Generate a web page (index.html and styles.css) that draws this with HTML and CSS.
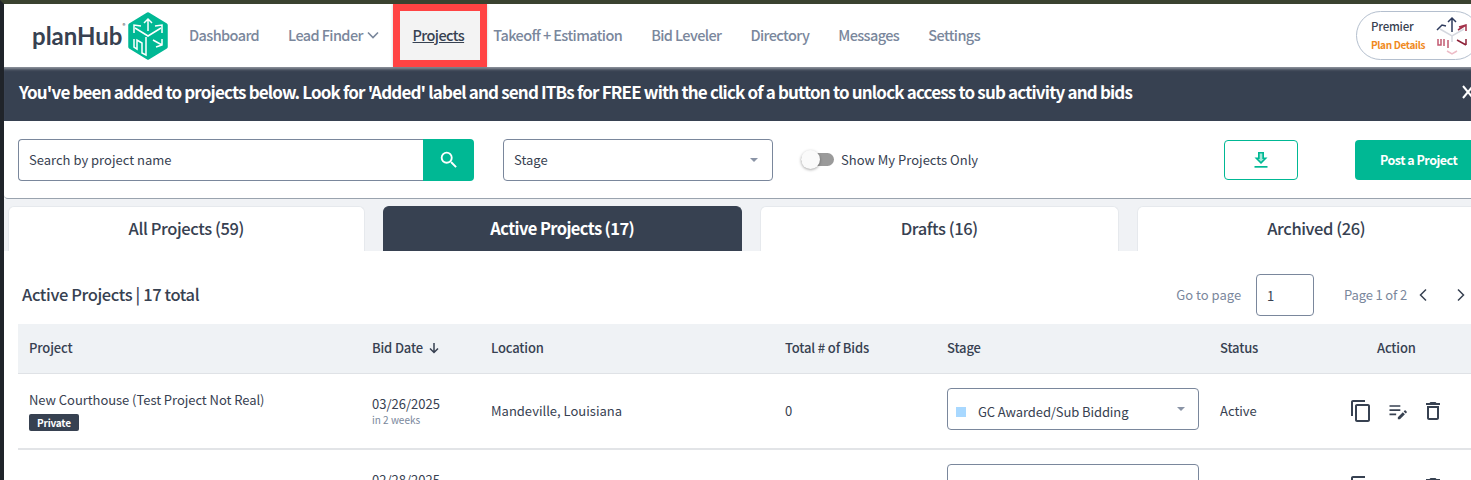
FILE: index.html
```html
<!DOCTYPE html>
<html lang="en">
<head>
<meta charset="utf-8">
<title>planHub Projects</title>
<link rel="stylesheet" href="styles.css">
</head>
<body>
<div class="app">
  <header class="nav">
    <div class="logo">
      <span class="logo-text">planHub</span><span class="logo-reg">®</span>
      <svg class="logo-mark" viewBox="0 0 42 48" width="42" height="48">
        <path d="M21 2 39 13v22L21 46 3 35V13z" fill="#00b894" stroke="#00b894" stroke-width="3.500" stroke-linejoin="round"/>
        <g fill="none" stroke="#fff" stroke-width="1.500">
          <path d="M21 7v12M17 11l4-4 4 4"/>
          <path d="M8 16l13 8 13-8"/>
          <path d="M7 21v-8l7 1M35 21v-8l-7 1"/>
          <path d="M7 27v8l3 2v-9l5 3v10l4 2V25"/>
          <path d="M26 28l9 5M35 27v6l-6 2"/>
        </g>
      </svg>
    </div>
    <nav class="menu">
      <a class="menu-item">Dashboard</a>
      <a class="menu-item">Lead Finder
        <svg class="chev" viewBox="0 0 12 8" width="12" height="8"><path d="M1 1.500l5 5 5-5" fill="none" stroke="#7a879c" stroke-width="1.600"/></svg>
      </a>
      <a class="menu-item menu-current"><span>Projects</span></a>
      <a class="menu-item">Takeoff + Estimation</a>
      <a class="menu-item">Bid Leveler</a>
      <a class="menu-item">Directory</a>
      <a class="menu-item">Messages</a>
      <a class="menu-item">Settings</a>
    </nav>
    <div class="plan">
      <div class="plan-text">
        <span class="plan-name">Premier</span>
        <span class="plan-link">Plan Details</span>
      </div>
      <svg class="plan-cube" viewBox="0 0 36 40" width="36" height="40">
        <g fill="none" stroke-width="1.500">
          <path d="M18 3v14M14 7l4-4 4 4" stroke="#2d3a5c"/>
          <path d="M3 15l5-5 4 1" stroke="#2d3a5c"/>
          <path d="M25 12l7-2v6M32 10l-8 5" stroke="#a3324a"/>
          <path d="M6 14l12 7 12-7M18 21v6" stroke="#d5d8df"/>
          <path d="M4 24v6h3v-6M10 24v7M14 25v8" stroke="#c25a72"/>
          <path d="M23 25l9 5M32 24v6" stroke="#8e2238"/>
          <path d="M13 36l5 3 5-3" stroke="#edbcc7"/>
        </g>
      </svg>
    </div>
  </header>

  <div class="banner">
    <p class="banner-text">You've been added to projects below. Look for 'Added' label and send ITBs for FREE with the click of a button to unlock access to sub activity and bids</p>
    <svg class="banner-close" viewBox="0 0 12 14" width="12" height="14"><path d="M1 1l10 12M11 1 1 13" stroke="#fff" stroke-width="2"/></svg>
  </div>

  <section class="toolbar">
    <div class="search">
      <span class="search-input">Search by project name</span>
      <span class="search-btn">
        <svg viewBox="0 0 24 24" width="22" height="22"><path fill="#fff" d="M15.500 14h-.79l-.28-.27A6.470 6.470 0 0 0 16 9.500 6.500 6.500 0 1 0 9.500 16c1.610 0 3.090-.59 4.230-1.570l.27.28v.79l5 4.990L20.490 19l-4.990-5zm-6 0C7.010 14 5 11.990 5 9.500S7.010 5 9.500 5 14 7.010 14 9.500 11.990 14 9.500 14z"/></svg>
      </span>
    </div>
    <div class="select stage-filter">
      <span>Stage</span>
      <i class="caret"></i>
    </div>
    <div class="toggle-wrap">
      <span class="toggle"><i class="knob"></i></span>
      <span class="toggle-label">Show My Projects Only</span>
    </div>
    <button class="btn-outline">
      <svg viewBox="0 0 16 16" width="16" height="16"><path fill="#00b894" d="M5 0h6v5.500h3.500L8 12 1.500 5.500H5z"/><path d="M6.700 1.500h2.600v5.500h1.500L8 9.800 5.200 7h1.500z" fill="#a6e8d8"/><path d="M1.500 14h13v1.700h-13z" fill="#00b894"/></svg>
    </button>
    <button class="btn-solid">Post a Project</button>
  </section>

  <div class="tabs">
    <div class="tab">All Projects (59)</div>
    <div class="tab tab-active">Active Projects (17)</div>
    <div class="tab">Drafts (16)</div>
    <div class="tab">Archived (26)</div>
  </div>

  <main class="panel">
    <div class="panel-head">
      <h2 class="panel-title">Active Projects | 17 total</h2>
      <div class="pager">
        <span class="pager-label">Go to page</span>
        <span class="pager-input">1</span>
        <span class="pager-label pager-count">Page 1 of 2</span>
        <svg class="pager-prev" viewBox="0 0 10 14" width="10" height="14"><path d="M8 1.500 2.500 7 8 12.500" fill="none" stroke="#374151" stroke-width="1.500"/></svg>
        <svg class="pager-next" viewBox="0 0 10 14" width="10" height="14"><path d="M2 1.500 7.500 7 2 12.500" fill="none" stroke="#374151" stroke-width="1.500"/></svg>
      </div>
    </div>

    <div class="row row-head">
      <div class="cell">Project</div>
      <div class="cell">Bid Date
        <svg class="sort" viewBox="0 0 12 12" width="12" height="12"><path d="M6 1v9M2 6.500 6 10.500l4-4" fill="none" stroke="#374151" stroke-width="1.500"/></svg>
      </div>
      <div class="cell">Location</div>
      <div class="cell">Total # of Bids</div>
      <div class="cell">Stage</div>
      <div class="cell">Status</div>
      <div class="cell cell-action">Action</div>
    </div>

    <div class="row row-body">
      <div class="cell cell-project">
        <span class="project-name">New Courthouse (Test Project Not Real)</span>
        <span class="badge">Private</span>
      </div>
      <div class="cell cell-date">
        <span>03/26/2025</span>
        <small>in 2 weeks</small>
      </div>
      <div class="cell">Mandeville, Louisiana</div>
      <div class="cell">0</div>
      <div class="cell">
        <div class="select stage-select">
          <i class="swatch"></i><span class="stage-name">GC Awarded/Sub Bidding</span>
          <i class="caret"></i>
        </div>
      </div>
      <div class="cell">Active</div>
      <div class="cell cell-icons">
        <svg viewBox="0 0 24 24" width="24" height="24"><path d="M16 1H4c-1.100 0-2 .9-2 2v14h2V3h12V1zm3 4H8c-1.100 0-2 .9-2 2v14c0 1.100.9 2 2 2h11c1.100 0 2-.9 2-2V7c0-1.100-.9-2-2-2zm0 16H8V7h11v14z"/></svg>
        <svg viewBox="0 0 24 24" width="20" height="20"><path d="M3 5h13v2H3zM3 10h13v2H3zM3 15h8v2H3zM13 19.500V22h2.500l6-6L19 13.500zM20 12.500l2.500 2.500 1-1a1 1 0 0 0 0-1.400l-1.100-1.100a1 1 0 0 0-1.400 0z"/></svg>
        <svg viewBox="0 0 24 24" width="24" height="24"><path d="M6 19c0 1.100.9 2 2 2h8c1.100 0 2-.9 2-2V7H6v12zM8 9h8v10H8V9zm7.500-5-1-1h-5l-1 1H5v2h14V4h-3.500z"/></svg>
      </div>
    </div>

    <div class="row row-body">
      <div class="cell"></div>
      <div class="cell cell-date"><span>02/28/2025</span><small>&nbsp;</small></div>
      <div class="cell"></div>
      <div class="cell"></div>
      <div class="cell"><div class="select stage-select"></div></div>
      <div class="cell"></div>
      <div class="cell cell-icons">
        <svg viewBox="0 0 24 24" width="24" height="24"><path d="M16 1H4c-1.100 0-2 .9-2 2v14h2V3h12V1zm3 4H8c-1.100 0-2 .9-2 2v14c0 1.100.9 2 2 2h11c1.100 0 2-.9 2-2V7c0-1.100-.9-2-2-2zm0 16H8V7h11v14z"/></svg>
        <svg viewBox="0 0 24 24" width="20" height="20"><path d="M3 5h13v2H3zM3 10h13v2H3zM3 15h8v2H3z"/></svg>
        <svg viewBox="0 0 24 24" width="24" height="24"><path d="M6 19c0 1.100.9 2 2 2h8c1.100 0 2-.9 2-2V7H6v12zM8 9h8v10H8V9zm7.500-5-1-1h-5l-1 1H5v2h14V4h-3.500z"/></svg>
      </div>
    </div>
  </main>
</div>
</body>
</html>
```

FILE: styles.css
```css
* { box-sizing: border-box; }

html, body {
  margin: 0;
  height: 480px;
  overflow: hidden;
  background: #fff;
}

body {
  font-family: "Noto Sans CJK SC", "Noto Sans", sans-serif;
  font-size: 13px;
  color: #374151;
}

.app {
  width: 1471px;
  height: 480px;
  overflow: hidden;
  border-top: 4px solid #3a4230;
  border-left: 4px solid #20242a;
}

/* top navigation */
.nav {
  display: flex;
  align-items: center;
  height: 63px;
  width: 1467px;
  background: #fff;
}

.logo {
  display: flex;
  align-items: center;
  width: 171px;
  padding: 0 6px 0 28px;
  flex: none;
}

.logo-text {
  font-family: "Lato", sans-serif;
  font-size: 24px;
  font-weight: 700;
  line-height: 1;
  color: #374151;
}

.logo-reg {
  font-size: 6px;
  line-height: 8px;
  align-self: flex-start;
  margin-top: 10px;
  color: #374151;
}

.logo-mark { flex: none; margin: 0 0 0 auto; }

.menu {
  display: flex;
  align-items: center;
  height: 100%;
  font-size: 14.500px;
  font-weight: 500;
  letter-spacing: -0.6px;
  color: #7a879c;
}

.menu-item {
  display: flex;
  align-items: center;
  gap: 4px;
  margin-top: -2px;
  padding: 0 14.500px;
  white-space: nowrap;
}

.menu-item:first-child { padding-left: 14px; }

.menu-current {
  height: 63px;
  width: 94px;
  justify-content: center;
  margin: 0 -8.500px 0 0;
  padding: 0 4px 2px 0;
  background: #f3f3f3;
  border: 7px solid #ff4343;
  box-shadow: 0 0 3px rgba(0, 0, 0, .2);
  color: #374151;
}

.menu-current span { text-decoration: underline; }

.chev { margin-top: 1px; }

.plan {
  display: flex;
  align-items: center;
  flex: none;
  width: 124px;
  height: 49px;
  margin: -1px -9px 0 auto;
  padding-left: 14px;
  border: 1px solid #b4bfce;
  border-radius: 25px;
  background: #fff;
}

.plan-text {
  display: flex;
  flex-direction: column;
  gap: 5px;
  width: 63px;
}

.plan-name {
  font-size: 11.500px;
  font-weight: 500;
  line-height: 14px;
  letter-spacing: -0.2px;
}

.plan-link {
  font-size: 10px;
  font-weight: 700;
  line-height: 13px;
  letter-spacing: -0.35px;
  color: #f08a1d;
  white-space: nowrap;
}

.plan-cube { flex: none; }

/* banner */
.banner {
  display: flex;
  align-items: center;
  justify-content: space-between;
  height: 54px;
  padding: 0 0 5px 15px;
  background: #374151;
  box-shadow: inset 0 4px 3px -2px rgba(255, 255, 255, .45);
}

.banner-text {
  margin: 0;
  font-size: 17px;
  font-weight: 700;
  letter-spacing: -0.83px;
  color: #fff;
  white-space: nowrap;
}

.banner-close { flex: none; margin-right: -3px; }

/* filter bar */
.toolbar {
  display: flex;
  align-items: center;
  height: 78px;
  padding-left: 14px;
  background: #fff;
  border-bottom: 1px solid #9aa3ae;
  border-radius: 0 0 0 4px;
}

.search {
  display: flex;
  width: 456px;
  height: 42px;
  flex: none;
}

.search-input {
  flex: 1;
  display: flex;
  align-items: center;
  padding-left: 10px;
  border: 1px solid #7a879c;
  border-right: 0;
  border-radius: 4px 0 0 4px;
}

.search-btn {
  display: flex;
  align-items: center;
  justify-content: center;
  width: 51px;
  background: #00b894;
  border-radius: 0 4px 4px 0;
}

.select {
  display: flex;
  align-items: center;
  border: 1px solid #7a879c;
  border-radius: 4px;
  background: #fff;
}

.caret {
  width: 0;
  height: 0;
  border-left: 4.500px solid transparent;
  border-right: 4.500px solid transparent;
  border-top: 4.500px solid #8a94a6;
  margin-left: auto;
}

.stage-filter {
  width: 270px;
  height: 42px;
  margin-left: 29px;
  padding: 0 14px 0 10px;
  flex: none;
}

.toggle-wrap {
  display: flex;
  align-items: center;
  gap: 7px;
  margin: -1px 0 0 28px;
  flex: none;
  width: 423px;
}

.toggle {
  position: relative;
  display: block;
  width: 33px;
  height: 13px;
  border-radius: 7px;
  background: #9a9a9a;
}

.knob {
  position: absolute;
  left: 0;
  top: -3px;
  width: 19px;
  height: 19px;
  border-radius: 50%;
  background: #fafafa;
  box-shadow: 0 1px 3px rgba(0, 0, 0, .35);
}

.btn-outline {
  display: flex;
  align-items: center;
  justify-content: center;
  flex: none;
  width: 74px;
  height: 40px;
  padding: 0;
  border: 1px solid #00b894;
  border-radius: 4px;
  background: #fff;
}

.btn-solid {
  flex: none;
  width: 130px;
  height: 40px;
  margin-left: 57px;
  padding: 0;
  text-align: left;
  text-indent: 25px;
  border: 0;
  border-radius: 4px;
  background: #00b894;
  color: #fff;
  font: 700 12.500px "Noto Sans CJK SC", "Noto Sans", sans-serif;
  letter-spacing: -0.5px;
}

/* tabs */
.tabs {
  display: flex;
  gap: 18.500px;
  height: 52px;
  padding: 7px 0 0 4px;
  background: #f0f2f5;
  font-size: 16.500px;
  font-weight: 500;
  letter-spacing: -0.4px;
}

.tab {
  flex: none;
  display: flex;
  align-items: center;
  justify-content: center;
  width: 358.500px;
  padding-bottom: 2px;
  background: #fff;
  border: 1px solid #e6e9ed;
  border-bottom: 0;
  border-radius: 6px 6px 0 0;
}

.tab:first-child { width: 356.500px; }

.tab-active {
  background: #374151;
  border-color: #374151;
  color: #fff;
  font-weight: 700;
  letter-spacing: -0.6px;
}

/* table panel */
.panel { background: #fff; padding: 0 0 0 14px; }

.panel-head {
  display: flex;
  align-items: center;
  justify-content: space-between;
  height: 73px;
  padding: 15px 0 0 4px;
}

.panel-title {
  margin: 0;
  font-size: 16.500px;
  font-weight: 500;
  line-height: 1.2;
  letter-spacing: -0.38px;
}

.pager {
  display: flex;
  align-items: center;
}

.pager-label { margin-top: -2px; color: #7a879c; font-size: 13px; }

.pager-count { letter-spacing: -0.15px; }

.pager-input {
  display: flex;
  align-items: center;
  width: 58px;
  height: 42px;
  margin: 0 30px 0 15px;
  padding-left: 10px;
  border: 1px solid #7a879c;
  border-radius: 4px;
}

.pager-prev { margin-left: 11px; }
.pager-next { margin-left: 28px; margin-right: 5px; }

.row {
  display: grid;
  grid-template-columns: 343px 119px 294px 162px 273px 119px 147px;
  align-items: center;
  width: 1477px;
}

.row-head {
  height: 50px;
  padding-bottom: 2px;
  background: #eff2f5;
  font-weight: 500;
  font-size: 13px;
  letter-spacing: -0.15px;
  border-bottom: 1px solid #dfe2e6;
}

.row-body {
  height: 76px;
  padding-bottom: 2px;
  border-bottom: 2px solid #e2e4e7;
}

.cell {
  padding-left: 11px;
  min-width: 0;
  white-space: nowrap;
}

.sort { vertical-align: -1px; margin-left: 2px; }

.row-head .cell-action { padding-left: 49px; }

.cell-project {
  display: flex;
  flex-direction: column;
  align-items: flex-start;
  gap: 5px;
  margin-top: 1px;
}

.project-name { line-height: 18px; letter-spacing: -0.05px; }

.badge {
  padding: 0 8px;
  font-size: 10px;
  font-weight: 700;
  line-height: 17px;
  letter-spacing: -0.2px;
  color: #fff;
  background: #374151;
  border-radius: 2px;
}

.cell-date {
  display: flex;
  flex-direction: column;
  line-height: 15px;
  margin-top: 2px;
}

.cell-date small {
  margin-top: 2px;
  font-size: 10px;
  line-height: 13px;
  color: #7a879c;
}

.stage-select {
  width: 252px;
  height: 42px;
  margin-top: -2px;
  padding: 5px 13px 0 8px;
}

.stage-select .caret { margin-top: -6px; }

.stage-name { letter-spacing: -0.1px; }

.swatch {
  display: block;
  width: 10px;
  height: 10px;
  margin: 0 12px 0 0;
  background: #a8d8ff;
}

.cell-icons {
  display: flex;
  align-items: center;
  gap: 14px;
  margin-top: 2px;
  padding-left: 21px;
}

.cell-icons svg { fill: #374151; flex: none; }
```
